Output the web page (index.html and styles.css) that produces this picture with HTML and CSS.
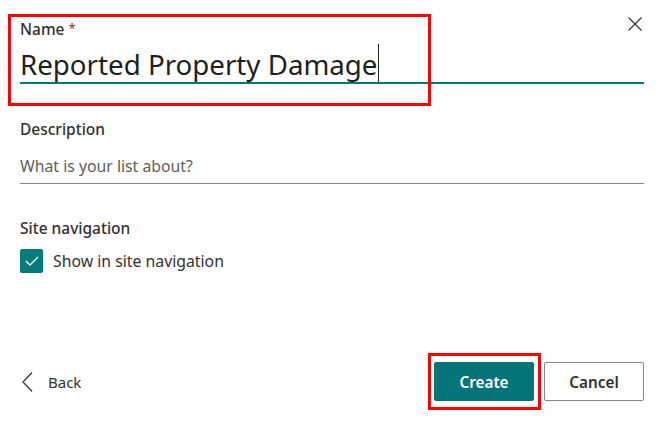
FILE: index.html
```html
<!DOCTYPE html>
<html lang="en">
<head>
<meta charset="utf-8">
<title>Create list</title>
<link rel="stylesheet" href="styles.css">
</head>
<body>
<div class="panel">
  <button class="close" aria-label="Close">
    <svg width="14" height="14" viewBox="0 0 14 14"><path d="M0.5 0.5 L13.5 13.5 M13.5 0.5 L0.5 13.5" stroke="#323130" stroke-width="1.2" fill="none"/></svg>
  </button>
  <div class="field">
    <div class="label">Name <span class="req">*</span></div>
    <div class="input input-name"><span class="value">Reported Property Damage</span><span class="caret"></span></div>
  </div>
  <div class="field field-desc">
    <div class="label">Description</div>
    <div class="input input-desc"><span class="placeholder">What is your list about?</span></div>
  </div>
  <div class="field field-nav">
    <div class="label">Site navigation</div>
    <label class="check">
      <span class="box"><svg width="14" height="10" viewBox="0 0 14 10"><path d="M1 5 L5 9 L13 1" stroke="#fff" stroke-width="1.4" fill="none"/></svg></span>
      <span class="check-text">Show in site navigation</span>
    </label>
  </div>
  <div class="footer">
    <button class="back">
      <svg width="11" height="20" viewBox="0 0 11 20"><path d="M10 0.5 L1 10 L10 19.5" stroke="#323130" stroke-width="1.2" fill="none"/></svg>
      <span>Back</span>
    </button>
    <div class="actions">
      <button class="btn primary">Create</button>
      <button class="btn secondary">Cancel</button>
    </div>
  </div>
  <div class="mark mark-name"></div>
  <div class="mark mark-create"></div>
</div>
</body>
</html>
```
FILE: styles.css
```css
* { box-sizing: border-box; }
html, body { margin: 0; padding: 0; background: #fff; }
body {
  font-family: "Noto Sans", "Open Sans", sans-serif;
  color: #323130;
  width: 663px;
  height: 429px;
  overflow: hidden;
}
.panel {
  position: relative;
  height: 429px;
  padding: 19px 19px 0 20px;
  display: flex;
  flex-direction: column;
}
.close {
  position: absolute;
  top: 17px;
  right: 21px;
  width: 14px;
  height: 14px;
  padding: 0;
  border: 0;
  background: none;
  display: flex;
}
.label {
  font-size: 15.5px;
  font-weight: 500;
  line-height: 21px;
  color: #323130;
}
.req {
  color: #a4262c;
  font-weight: 400;
  font-size: 13px;
  vertical-align: top;
  line-height: 18px;
}
.input {
  display: flex;
  align-items: flex-end;
}
.input-name {
  height: 44px;
  border-bottom: 2px solid #03787c;
}
.value {
  font-size: 27.7px;
  line-height: 36px;
  color: #201f1e;
}
.caret {
  width: 1px;
  height: 38px;
  background: #201f1e;
  margin-left: 1px;
  align-self: flex-end;
}
.field-desc { margin-top: 35px; }
.input-desc {
  height: 44px;
  border-bottom: 1px solid #8a8886;
  padding-bottom: 6px;
}
.placeholder {
  font-size: 15.8px;
  line-height: 22px;
  color: #605e5c;
}
.field-nav { margin-top: 34px; }
.check {
  display: flex;
  align-items: center;
  gap: 10px;
  margin-top: 10px;
}
.box {
  width: 23px;
  height: 24px;
  background: #037c7c;
  border-radius: 2px;
  display: flex;
  align-items: center;
  justify-content: center;
}
.check-text {
  font-size: 15.8px;
  line-height: 22px;
  color: #323130;
}
.footer {
  margin-top: auto;
  margin-bottom: 28px;
  display: flex;
  align-items: center;
  justify-content: space-between;
}
.back {
  display: flex;
  align-items: center;
  gap: 15px;
  padding: 0 0 0 2px;
  border: 0;
  background: none;
  font-family: inherit;
  font-size: 15px;
  color: #323130;
}
.actions { display: flex; gap: 10px; }
.btn {
  width: 100px;
  height: 39px;
  border-radius: 2px;
  font-family: inherit;
  font-size: 15.3px;
  font-weight: 600;
}
.primary {
  background: #037477;
  border: 1px solid #037477;
  color: #fff;
}
.secondary {
  background: #fff;
  border: 1px solid #8a8886;
  color: #323130;
}
.mark {
  position: absolute;
  border: 3px solid #f00;
  pointer-events: none;
}
.mark-name { left: 8px; top: 14px; width: 423px; height: 92px; }
.mark-create { left: 428px; top: 353px; width: 113px; height: 57px; }
```
